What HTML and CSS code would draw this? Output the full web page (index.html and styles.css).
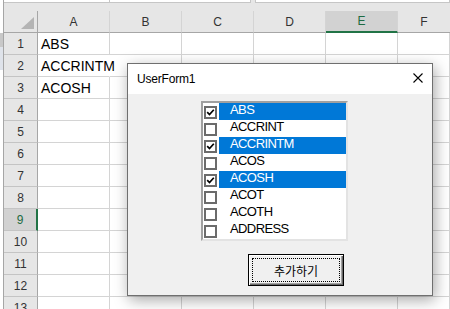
FILE: index.html
```html
<!DOCTYPE html>
<html>
<head>
   <meta charset="UTF-8">
   <title>UserForm1</title>
   <link rel="stylesheet" href="styles.css">
</head>
<body>
   <div class="app">
      <div class="edge">
         <div class="edge-a"></div>
         <div class="edge-b"></div>
      </div>
      <div class="main">
         <div class="formula">
            <div class="fbox w1"></div>
            <div class="fbox w2"></div>
            <div class="fbox w3"></div>
         </div>
         <div class="gap"></div>
         <table class="sheet">
            <tr class="head">
               <th class="corner"></th>
               <th class="cw">A</th>
               <th class="cw">B</th>
               <th class="cw">C</th>
               <th class="cw">D</th>
               <th class="cw sel-col">E</th>
               <th class="cw last">F</th>
            </tr>
            <tr><th>1</th><td>ABS</td><td></td><td></td><td></td><td></td><td></td></tr>
            <tr><th>2</th><td class="spill">ACCRINTM</td><td></td><td></td><td></td><td></td><td></td></tr>
            <tr><th>3</th><td>ACOSH</td><td></td><td></td><td></td><td></td><td></td></tr>
            <tr><th>4</th><td></td><td></td><td></td><td></td><td></td><td></td></tr>
            <tr><th>5</th><td></td><td></td><td></td><td></td><td></td><td></td></tr>
            <tr><th>6</th><td></td><td></td><td></td><td></td><td></td><td></td></tr>
            <tr><th>7</th><td></td><td></td><td></td><td></td><td></td><td></td></tr>
            <tr><th>8</th><td></td><td></td><td></td><td></td><td></td><td></td></tr>
            <tr><th class="sel-row">9</th><td></td><td></td><td></td><td></td><td></td><td></td></tr>
            <tr><th>10</th><td></td><td></td><td></td><td></td><td></td><td></td></tr>
            <tr><th>11</th><td></td><td></td><td></td><td></td><td></td><td></td></tr>
            <tr><th>12</th><td></td><td></td><td></td><td></td><td></td><td></td></tr>
            <tr><th>13</th><td></td><td></td><td></td><td></td><td></td><td></td></tr>
         </table>
      </div>
   </div>

   <div class="dialog">
      <div class="titlebar">
         <span class="title">UserForm1</span>
         <svg class="close" width="10" height="10" viewBox="0 0 10 10">
            <path d="M0.5 0.5 L9.5 9.5 M9.5 0.5 L0.5 9.5" stroke="#000" stroke-width="1.1" fill="none"/>
         </svg>
      </div>
      <div class="dialog-body">
         <ul class="listbox">
            <li class="sel"><span class="cb on"><svg width="9" height="9" viewBox="0 0 9 9"><path d="M1.2 4.2 L3.5 6.6 L7.8 1.8" stroke="#000" stroke-width="1.7" fill="none"/></svg></span><span class="label">ABS</span></li>
            <li><span class="cb"></span><span class="label">ACCRINT</span></li>
            <li class="sel"><span class="cb on"><svg width="9" height="9" viewBox="0 0 9 9"><path d="M1.2 4.2 L3.5 6.6 L7.8 1.8" stroke="#000" stroke-width="1.7" fill="none"/></svg></span><span class="label">ACCRINTM</span></li>
            <li><span class="cb"></span><span class="label">ACOS</span></li>
            <li class="sel"><span class="cb on"><svg width="9" height="9" viewBox="0 0 9 9"><path d="M1.2 4.2 L3.5 6.6 L7.8 1.8" stroke="#000" stroke-width="1.7" fill="none"/></svg></span><span class="label">ACOSH</span></li>
            <li><span class="cb"></span><span class="label">ACOT</span></li>
            <li><span class="cb"></span><span class="label">ACOTH</span></li>
            <li><span class="cb"></span><span class="label">ADDRESS</span></li>
         </ul>
         <button class="add" type="button"><span class="focus">추가하기</span></button>
      </div>
   </div>
</body>
</html>
```

FILE: styles.css
```css
body {
   margin: 0;
   background: white;
   font-family: "Liberation Sans", Arial, sans-serif;
   overflow: hidden;
}
.app {
   display: flex;
   height: 309px;
}
.edge {
   width: 3px;
   border-right: 1px solid #a6a6a6;
   background: white;
   padding-top: 33px;
}
.edge-a {
   height: 14px;
   background: #c8c8c8;
}
.edge-b {
   height: 23px;
   background: #dfe3ea;
}
.main {
   flex: 1;
   background: #e6e6e6;
}
.formula {
   display: flex;
   height: 3px;
}
.fbox {
   background: white;
   border-bottom: 1px solid #c6c6c6;
   border-right: 1px solid #c6c6c6;
}
.w1 { width: 105px; }
.w2 { width: 140px; margin-right: 4px; }
.w3 { flex: 1; border-left: 1px solid #c6c6c6; }
.gap {
   height: 8px;
}

/* sheet */
.sheet {
   border-collapse: separate;
   border-spacing: 0;
   table-layout: fixed;
   width: 446px;
   background: white;
}
.sheet th {
   box-sizing: border-box;
   height: 22px;
   padding: 0;
   font-weight: normal;
   font-size: 12px;
   color: #333;
   text-align: center;
   background: #e6e6e6;
   border-right: 1px solid #a6a6a6;
   border-bottom: 1px solid #c4c4c4;
}
.sheet td {
   box-sizing: border-box;
   height: 22px;
   padding: 0 0 0 3px;
   font-size: 14px;
   color: black;
   white-space: nowrap;
   border-right: 1px solid #d4d4d4;
   border-bottom: 1px solid #d4d4d4;
}
.sheet td.spill {
   border-right-color: transparent;
}
.head th {
   height: 22px;
   border-right: 1px solid #d4d4d4;
   border-bottom: 1px solid #a6a6a6;
}
.head .corner {
   width: 34px;
   position: relative;
   border-right: 1px solid #a6a6a6;
}
.corner:after {
   content: "";
   position: absolute;
   right: 3px;
   bottom: 3px;
   border-left: 13px solid transparent;
   border-bottom: 12px solid #b4b4b4;
}
.head .cw {
   width: 72px;
}
.head .last {
   width: 52px;
   border-right: none;
}
.head .sel-col {
   background: #d2d2d2;
   color: #1e6b43;
   border-bottom: 2px solid #217346;
}
.sheet th.sel-row {
   background: #d2d2d2;
   color: #1e6b43;
   border-right: 2px solid #217346;
}

/* dialog */
.dialog {
   position: absolute;
   left: 127px;
   top: 63px;
   width: 306px;
   height: 233px;
   box-sizing: border-box;
   border: 1px solid #6f6f6f;
   background: #f0f0f0;
   box-shadow: 2px 4px 14px rgba(0, 0, 0, 0.35);
}
.titlebar {
   height: 30px;
   background: white;
   display: flex;
   justify-content: space-between;
   align-items: center;
   padding: 0 9px;
}
.title {
   font-size: 12px;
   letter-spacing: -0.2px;
   color: #000;
   margin-top: -1px;
}
.close {
   margin-top: -2px;
}
.dialog-body {
   padding-top: 7px;
}
.listbox {
   list-style: none;
   margin: 0 0 0 73px;
   padding: 0;
   width: 147px;
   box-sizing: border-box;
   background: white;
   border: 2px solid;
   border-color: #a0a0a0 #e3e3e3 #e3e3e3 #a0a0a0;
}
.listbox li {
   display: flex;
   height: 17px;
}
.cb {
   box-sizing: border-box;
   width: 13px;
   height: 13px;
   margin: 3px 0 0 1px;
   border: 2px solid #6b6b6b;
   background: white;
   display: flex;
   align-items: center;
   justify-content: center;
}
.label {
   flex: 1;
   margin-left: 2px;
   padding-left: 11px;
   font-size: 13px;
   line-height: 13px;
   letter-spacing: -0.6px;
   color: black;
}
.sel .label {
   background: #0078d7;
   color: white;
}
.add {
   margin: 13px 0 0 120px;
   width: 96px;
   height: 32px;
   padding: 3px;
   display: flex;
   background: #f0f0f0;
   border: 1px solid #000;
   box-shadow: inset 1px 1px #fff, inset -1px -1px #696969, inset -2px -2px #a0a0a0;
   cursor: pointer;
}
.focus {
   flex: 1;
   display: flex;
   align-items: center;
   justify-content: center;
   border: 1px dotted #000;
   font-family: "Noto Sans CJK KR", sans-serif;
   font-size: 12px;
   color: #000;
}
```
